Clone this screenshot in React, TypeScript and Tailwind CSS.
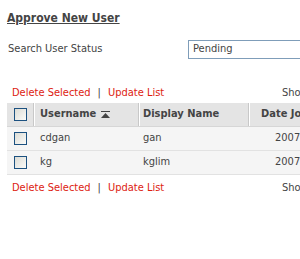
import React from "react";

const font = { fontFamily: '"DejaVu Sans Condensed", "Liberation Sans", sans-serif' };

function Box() {
  return (
    <span className="inline-block w-[13px] h-[13px] border border-[#1c5180] bg-gradient-to-br from-[#dcdcd5] to-[#fbfbf9]" />
  );
}

function SortIcon() {
  return (
    <svg width="9" height="8" viewBox="0 0 9 8" className="ml-[5px]">
      <rect x="0" y="0" width="9" height="1" fill="#444" />
      <polygon points="4.5,2 9,7 0,7" fill="#444" />
    </svg>
  );
}

export default function App() {
  const rows = [
    { u: "cdgan", d: "gan", t: "2007-08-15" },
    { u: "kg", d: "kglim", t: "2007-08-16" },
  ];
  const Links = () => (
    <div className="flex items-center h-[14px] w-[420px]">
      <span className="text-[#dd2211] ml-[12px]">Delete Selected</span>
      <span className="text-[#444] ml-[7px] mr-[7px]">|</span>
      <span className="text-[#dd2211]">Update List</span>
      <span className="text-[#444] ml-auto w-[138px]">Showing 1 - 2 of 2</span>
    </div>
  );
  return (
    <div className="w-[300px] h-[259px] overflow-hidden bg-white text-[11px] text-[#444]" style={font}>
      <div className="w-[560px]">
        <div className="pt-[11px] pl-[7px] font-bold text-[12px] underline leading-[14px] text-[#444]">Approve New User</div>
        <div className="flex items-center mt-[15px] h-[19px]">
          <span className="ml-[8px] w-[180px]">Search User Status</span>
          <div className="w-[150px] h-[19px] border border-[#7f9db9] flex items-center pl-[4px] text-[#444]">Pending</div>
        </div>
        <div className="mt-[27px]">
          <Links />
        </div>
        <div className="mt-[3px] ml-[7px] w-[400px]">
          <div className="flex h-[24px] bg-[#e4e4e4] font-bold text-[#444] border-b border-[#d6d6d6]">
            <div className="w-[27px] flex items-center justify-center border-r border-[#c8c8c8]"><Box /></div>
            <div className="w-[1px] bg-white" />
            <div className="w-[104px] flex items-center pl-[5px] border-r border-[#c8c8c8]">Username<SortIcon /></div>
            <div className="w-[1px] bg-white" />
            <div className="w-[109px] flex items-center pl-[3px] border-r border-[#c8c8c8]">Display Name</div>
            <div className="w-[1px] bg-white" />
            <div className="flex-1 flex items-center pl-[11px]">Date Joined</div>
          </div>
          {rows.map((r) => (
            <div key={r.u} className="flex h-[24px] bg-[#f5f5f5] border-b border-[#e2e2e2] items-center">
              <div className="w-[27px] flex items-center justify-center"><Box /></div>
              <div className="w-[1px]" />
              <div className="w-[104px] pl-[5px]">{r.u}</div>
              <div className="w-[1px]" />
              <div className="w-[109px] pl-[3px]">{r.d}</div>
              <div className="w-[1px]" />
              <div className="flex-1 pl-[25px]">{r.t}</div>
            </div>
          ))}
        </div>
        <div className="mt-[6px]">
          <Links />
        </div>
      </div>
    </div>
  );
}
